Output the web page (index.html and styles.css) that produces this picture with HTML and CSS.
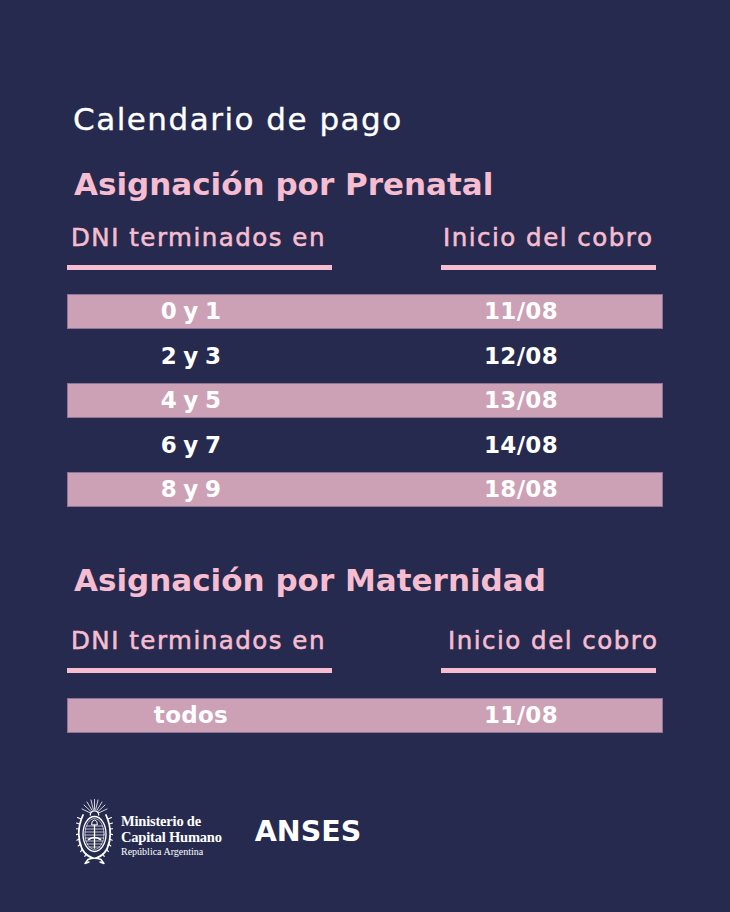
FILE: index.html
```html
<!DOCTYPE html>
<html lang="es">
<head>
<meta charset="utf-8">
<title>Calendario de pago</title>
<link rel="stylesheet" href="styles.css">
</head>
<body>
<main class="page">
  <h1 class="title">Calendario de pago</h1>

  <section class="block block--first">
    <h2 class="heading">Asignación por Prenatal</h2>
    <div class="cols">
      <div class="col-head col-head--left">DNI terminados en</div>
      <div class="col-head col-head--right">Inicio del cobro</div>
    </div>
    <div class="rows">
      <div class="row row--shade"><span class="c1">0 y 1</span><span class="c2">11/08</span></div>
      <div class="row"><span class="c1">2 y 3</span><span class="c2">12/08</span></div>
      <div class="row row--shade"><span class="c1">4 y 5</span><span class="c2">13/08</span></div>
      <div class="row"><span class="c1">6 y 7</span><span class="c2">14/08</span></div>
      <div class="row row--shade"><span class="c1">8 y 9</span><span class="c2">18/08</span></div>
    </div>
  </section>

  <section class="block block--second">
    <h2 class="heading">Asignación por Maternidad</h2>
    <div class="cols cols--second">
      <div class="col-head col-head--left">DNI terminados en</div>
      <div class="col-head col-head--right col-head--shift">Inicio del cobro</div>
    </div>
    <div class="rows rows--second">
      <div class="row row--shade"><span class="c1">todos</span><span class="c2">11/08</span></div>
    </div>
  </section>

  <footer class="footer">
    <div class="ministry">
      <svg class="emblem" width="37" height="66" viewBox="0 0 37 66" fill="none" stroke="#fff" stroke-linecap="round">
        <!-- sun rays -->
        <g stroke-width="0.8">
          <line x1="14.5" y1="14" x2="6" y2="10"/>
          <line x1="15" y1="12.5" x2="8" y2="6"/>
          <line x1="16" y1="11.2" x2="11" y2="3"/>
          <line x1="17.3" y1="10.6" x2="15" y2="1"/>
          <line x1="18.5" y1="10.4" x2="18.5" y2="0.5"/>
          <line x1="19.7" y1="10.6" x2="22" y2="1"/>
          <line x1="21" y1="11.2" x2="26" y2="3"/>
          <line x1="22" y1="12.5" x2="29" y2="6"/>
          <line x1="22.5" y1="14" x2="31" y2="10"/>
        </g>
        <path d="M14.3 16 A4.2 4.2 0 0 1 22.7 16" stroke-width="1.3"/>
        <!-- laurel branches -->
        <path d="M7 16 Q-1 34 6 50 Q10 57 17 59" stroke-width="1.8"/>
        <path d="M30 16 Q38 34 31 50 Q27 57 20 59" stroke-width="1.8"/>
        <g stroke-width="1.1">
          <path d="M5 20 l-3.5 -1.5 M3.5 25 l-3 -1 M2.8 30 l-2.6 -0.3 M2.8 35 l-2.6 0.6 M3.4 40 l-2.6 1.3 M4.6 45 l-2.4 2 M6.6 50 l-2 2.6 M10 54.5 l-1.2 3"/>
          <path d="M32 20 l3.5 -1.5 M33.5 25 l3 -1 M34.2 30 l2.6 -0.3 M34.2 35 l2.6 0.6 M33.6 40 l2.6 1.3 M32.4 45 l2.4 2 M30.4 50 l2 2.6 M27 54.5 l1.2 3"/>
        </g>
        <!-- shield -->
        <ellipse cx="18.5" cy="35" rx="11.5" ry="17.5" stroke-width="1.3"/>
        <ellipse cx="18.5" cy="35" rx="9.6" ry="15.6" stroke-width="0.6"/>
        <g stroke-width="0.7">
          <line x1="10.2" y1="27" x2="26.8" y2="27"/>
          <line x1="9.3" y1="30" x2="27.7" y2="30"/>
          <line x1="9" y1="33" x2="28" y2="33"/>
          <line x1="9" y1="36" x2="28" y2="36"/>
          <line x1="9.3" y1="39" x2="27.7" y2="39"/>
          <line x1="9.9" y1="42" x2="27.1" y2="42"/>
          <line x1="11" y1="45" x2="26" y2="45"/>
          <line x1="12.8" y1="48" x2="24.2" y2="48"/>
        </g>
        <line x1="18.5" y1="26" x2="18.5" y2="49" stroke-width="1.3"/>
        <path d="M15.6 25.5 Q15.2 21.5 18.5 21 Q21.8 21.5 21.4 25.5 Z" fill="#262a4f" stroke-width="1"/>
        <path d="M12.5 40.5 Q18.5 36.5 24.5 40.5" stroke-width="1.6"/>
        <!-- ribbon -->
        <path d="M12 60.5 Q18.5 58 25 60.5 L28 64.5 L24 63 M12 60.5 L9 64.5 L13 63" stroke-width="1.4" stroke-linejoin="round"/>
      </svg>
      <div class="ministry-text">
        <div class="ministry-name">Ministerio de</div>
        <div class="ministry-name">Capital Humano</div>
        <div class="ministry-sub">República Argentina</div>
      </div>
    </div>
    <div class="anses">ANSES</div>
  </footer>
</main>
</body>
</html>
```

FILE: styles.css
```css
html, body {
  margin: 0;
  padding: 0;
  background: #262a4f;
}

.page {
  width: 730px;
  height: 912px;
  box-sizing: border-box;
  padding: 101px 0 0 67px;
  background: #262a4f;
  font-family: "DejaVu Sans", "Open Sans", sans-serif;
  color: #fff;
  overflow: hidden;
}

.title {
  margin: 0 0 0 6px;
  font-size: 31px;
  font-weight: 400;
  line-height: 36px;
  letter-spacing: 1.5px;
  color: #fff;
  -webkit-text-stroke: 0.35px #fff;
}

.block--first {
  margin-top: 29px;
}

.block--second {
  margin-top: 55px;
}

.heading {
  margin: 0 0 0 7px;
  font-size: 31px;
  font-weight: 700;
  line-height: 36px;
  color: #f6bdd0;
}

.cols {
  display: grid;
  grid-template-columns: 265px 213px;
  column-gap: 111px;
  margin-top: 21px;
}

.cols--second {
  margin-top: 28px;
}

.col-head {
  font-size: 24.5px;
  font-weight: 400;
  line-height: 30px;
  letter-spacing: 1.5px;
  color: #f6bdd0;
  -webkit-text-stroke: 0.55px #f6bdd0;
  padding-bottom: 12px;
  border-bottom: 5px solid #f6bdd0;
  white-space: nowrap;
}

.col-head--left {
  padding-left: 4px;
}

.col-head--right {
  margin-left: -2px;
  padding-left: 2px;
}

.col-head--shift {
  padding-left: 7px;
}

.rows {
  margin-top: 23.5px;
  display: flex;
  flex-direction: column;
  gap: 9.6px;
  width: 596px;
}

.rows--second {
  margin-top: 25px;
}

.row {
  display: grid;
  grid-template-columns: 246px 240px;
  column-gap: 87px;
  height: 35px;
  align-items: center;
  box-sizing: border-box;
  border: 1px solid transparent;
}

.row--shade {
  background: #cca1b5;
  border-color: #8e7596;
}

.c1, .c2 {
  text-align: center;
  font-size: 23px;
  font-weight: 700;
  line-height: 30px;
  letter-spacing: 0.3px;
  word-spacing: -2px;
  color: #fff;
}

.footer {
  margin-top: 66px;
  margin-left: 9px;
  display: flex;
  align-items: center;
  gap: 33px;
}

.ministry {
  display: flex;
  align-items: center;
  gap: 8px;
}

.emblem {
  display: block;
  flex: none;
}

.ministry-text {
  font-family: "Liberation Serif", "DejaVu Serif", serif;
  color: #fff;
  padding-top: 8px;
}

.ministry-name {
  font-size: 14.5px;
  font-weight: 700;
  line-height: 16px;
  letter-spacing: -0.2px;
}

.ministry-sub {
  margin-top: 1px;
  font-size: 10px;
  line-height: 12px;
}

.anses {
  font-family: "DejaVu Sans", "Open Sans", sans-serif;
  font-size: 28.5px;
  font-weight: 700;
  line-height: 34px;
  color: #fff;
}
```
